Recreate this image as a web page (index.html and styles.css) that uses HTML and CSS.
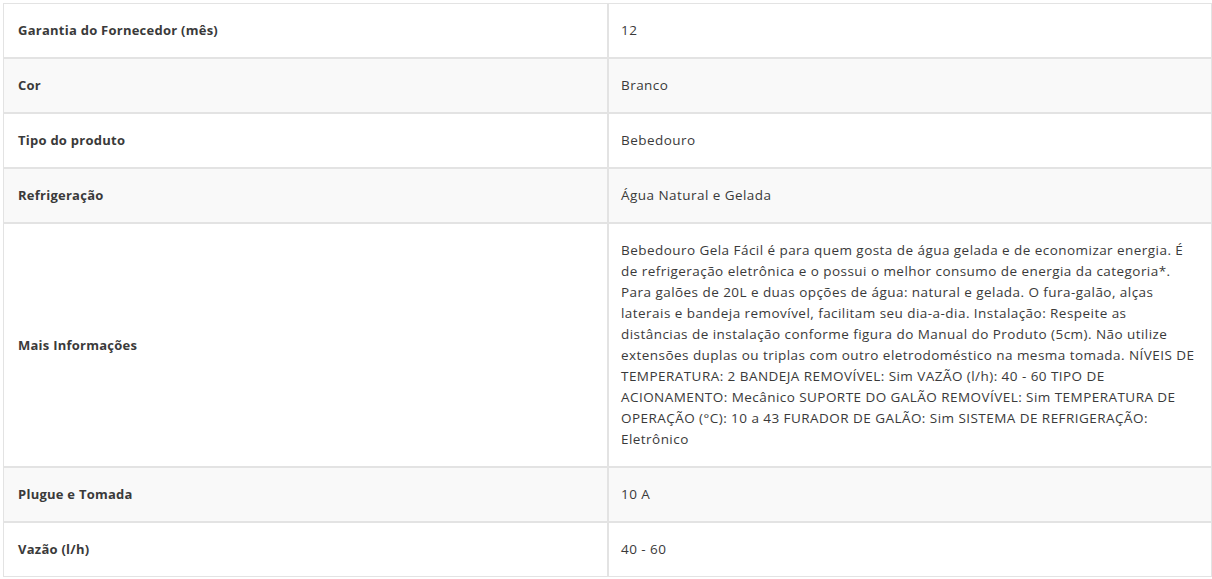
FILE: index.html
```html
<!DOCTYPE html>
<html lang="pt-BR">
<head>
<meta charset="utf-8">
<link rel="stylesheet" href="styles.css">
</head>
<body>
<table class="specs">
  <tbody>
    <tr>
      <th class="label">Garantia do Fornecedor (mês)</th>
      <td class="value">12</td>
    </tr>
    <tr class="alt">
      <th class="label">Cor</th>
      <td class="value">Branco</td>
    </tr>
    <tr>
      <th class="label">Tipo do produto</th>
      <td class="value">Bebedouro</td>
    </tr>
    <tr class="alt">
      <th class="label">Refrigeração</th>
      <td class="value">Água Natural e Gelada</td>
    </tr>
    <tr>
      <th class="label">Mais Informações</th>
      <td class="value">Bebedouro Gela Fácil é para quem gosta de água gelada e de economizar energia. É de refrigeração eletrônica e o possui o melhor consumo de energia da categoria*. Para galões de 20L e duas opções de água: natural e gelada. O fura-galão, alças laterais e bandeja removível, facilitam seu dia-a-dia. Instalação: Respeite as distâncias de instalação conforme figura do Manual do Produto (5cm). Não utilize extensões duplas ou triplas com outro eletrodoméstico na mesma tomada. NÍVEIS DE TEMPERATURA: 2 BANDEJA REMOVÍVEL: Sim VAZÃO (l/h): 40 - 60 TIPO DE ACIONAMENTO: Mecânico SUPORTE DO GALÃO REMOVÍVEL: Sim TEMPERATURA DE OPERAÇÃO (°C): 10 a 43 FURADOR DE GALÃO: Sim SISTEMA DE REFRIGERAÇÃO: Eletrônico</td>
    </tr>
    <tr class="alt">
      <th class="label">Plugue e Tomada</th>
      <td class="value">10 A</td>
    </tr>
    <tr>
      <th class="label">Vazão (l/h)</th>
      <td class="value">40 - 60</td>
    </tr>
  </tbody>
</table>
</body>
</html>
```

FILE: styles.css
```css
html, body {
  margin: 0;
  padding: 0;
  background: #fff;
}
body {
  padding: 3px 0 0 3px;
}
.specs {
  width: 1209px;
  border-collapse: separate;
  border-spacing: 0;
  table-layout: fixed;
}
.specs th,
.specs td {
  box-sizing: border-box;
  border: 1px solid #e3e3e3;
  padding: 16px 13px 16px 14px;
  vertical-align: middle;
  text-align: left;
  line-height: 21px;
}
.specs th {
  width: 605px;
}
.specs td {
  padding-left: 12px;
  padding-right: 14px;
}
.specs .alt th,
.specs .alt td {
  background: #f9f9f9;
}
.label {
  font-family: "Open Sans", "Noto Sans", sans-serif;
  font-weight: 700;
  font-size: 13px;
  letter-spacing: 0.25px;
  color: #3a3a3a;
}
.value {
  font-family: "Open Sans", sans-serif;
  font-weight: 400;
  font-size: 13.5px;
  letter-spacing: 0.45px;
  color: #3a3a3a;
}
```
